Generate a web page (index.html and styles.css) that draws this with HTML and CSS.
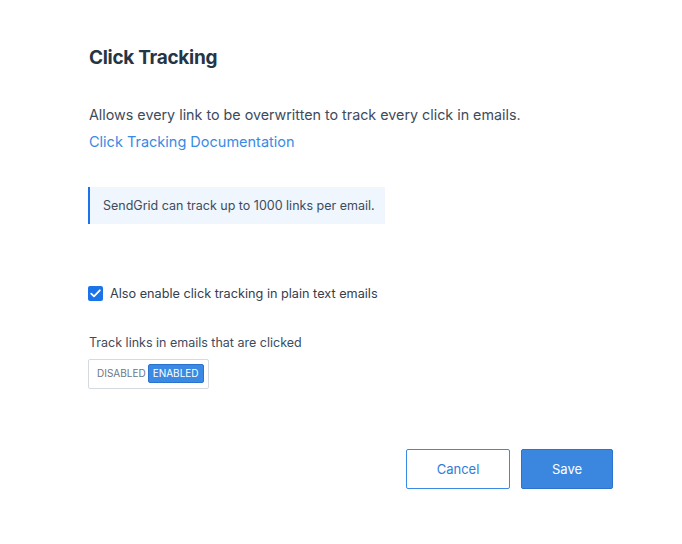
FILE: index.html
```html
<!DOCTYPE html>
<html lang="en">
<head>
    <meta charset="UTF-8">
    <title>Click Tracking</title>
    <link rel="stylesheet" href="styles.css">
</head>
<body>
    <div class="modal">
        <h2 class="title">Click Tracking</h2>
        <p class="desc">Allows every link to be overwritten to track every click in emails.</p>
        <a class="doc-link" href="#">Click Tracking Documentation</a>

        <div class="callout">SendGrid can track up to 1000 links per email.</div>

        <label class="check">
            <span class="box">
                <svg width="11" height="9" viewBox="0 0 11 9"><path d="M1.2 4.6 L4 7.3 L9.8 1.3" fill="none" stroke="#fff" stroke-width="1.8" stroke-linecap="round" stroke-linejoin="round"/></svg>
            </span>
            Also enable click tracking in plain text emails
        </label>

        <div class="field-label">Track links in emails that are clicked</div>
        <div class="toggle">
            <span class="opt">DISABLED</span>
            <span class="opt on">ENABLED</span>
        </div>

        <div class="actions">
            <button class="btn secondary">Cancel</button>
            <button class="btn primary">Save</button>
        </div>
    </div>
</body>
</html>
```

FILE: styles.css
```css
body {
    margin: 0;
    background: #fff;
    font-family: 'Inter', 'Noto Sans', sans-serif;
    color: #3d4b5c;
}

.modal {
    width: 524px;
    padding: 44px 0 0 89px;
}

.title {
    margin: 0;
    font-size: 19px;
    font-weight: 700;
    color: #263545;
    letter-spacing: -0.3px;
    line-height: 28px;
}

.desc {
    margin: 32px 0 0;
    font-size: 14.3px;
    line-height: 22px;
}

.doc-link {
    display: block;
    margin-top: 5px;
    font-size: 14.5px;
    line-height: 22px;
    color: #3a8ae3;
    text-decoration: none;
}

.callout {
    width: 272px;
    margin: 34px 0 0 -1px;
    padding: 10px 10px 10px 13px;
    border-left: 2px solid #1a73e8;
    background: #eff6fe;
    font-size: 12.5px;
    line-height: 17px;
}

.check {
    display: flex;
    align-items: center;
    gap: 7px;
    margin: 62px 0 0 -1px;
    font-size: 12.7px;
    color: #34404f;
}

.box {
    width: 15px;
    height: 15px;
    border-radius: 2px;
    background: #1a73e8;
    display: flex;
    align-items: center;
    justify-content: center;
}

.field-label {
    margin-top: 33px;
    font-size: 12.5px;
    line-height: 18px;
}

.toggle {
    display: inline-flex;
    align-items: center;
    margin: 7px 0 0 -1px;
    padding: 4px 4px 5px 8px;
    border: 1px solid #d4dadf;
    border-radius: 2px;
    gap: 2px;
}

.opt {
    font-size: 10px;
    color: #6b7785;
    line-height: 19px;
}

.opt.on {
    background: #3a8ae3;
    color: #fff;
    border: 1px solid #2a74d0;
    border-radius: 2px;
    padding: 0 4px;
    line-height: 17px;
}

.actions {
    display: flex;
    justify-content: flex-end;
    gap: 11px;
    margin-top: 60px;
}

.btn {
    height: 40px;
    font-family: inherit;
    font-size: 13px;
    border-radius: 2px;
    cursor: pointer;
}

.secondary {
    width: 104px;
    background: #fff;
    color: #2f7dd8;
    border: 1px solid #3a8ae3;
}

.primary {
    width: 92px;
    background: #3b87e0;
    color: #fff;
    border: 1px solid #2a74d0;
}
```
